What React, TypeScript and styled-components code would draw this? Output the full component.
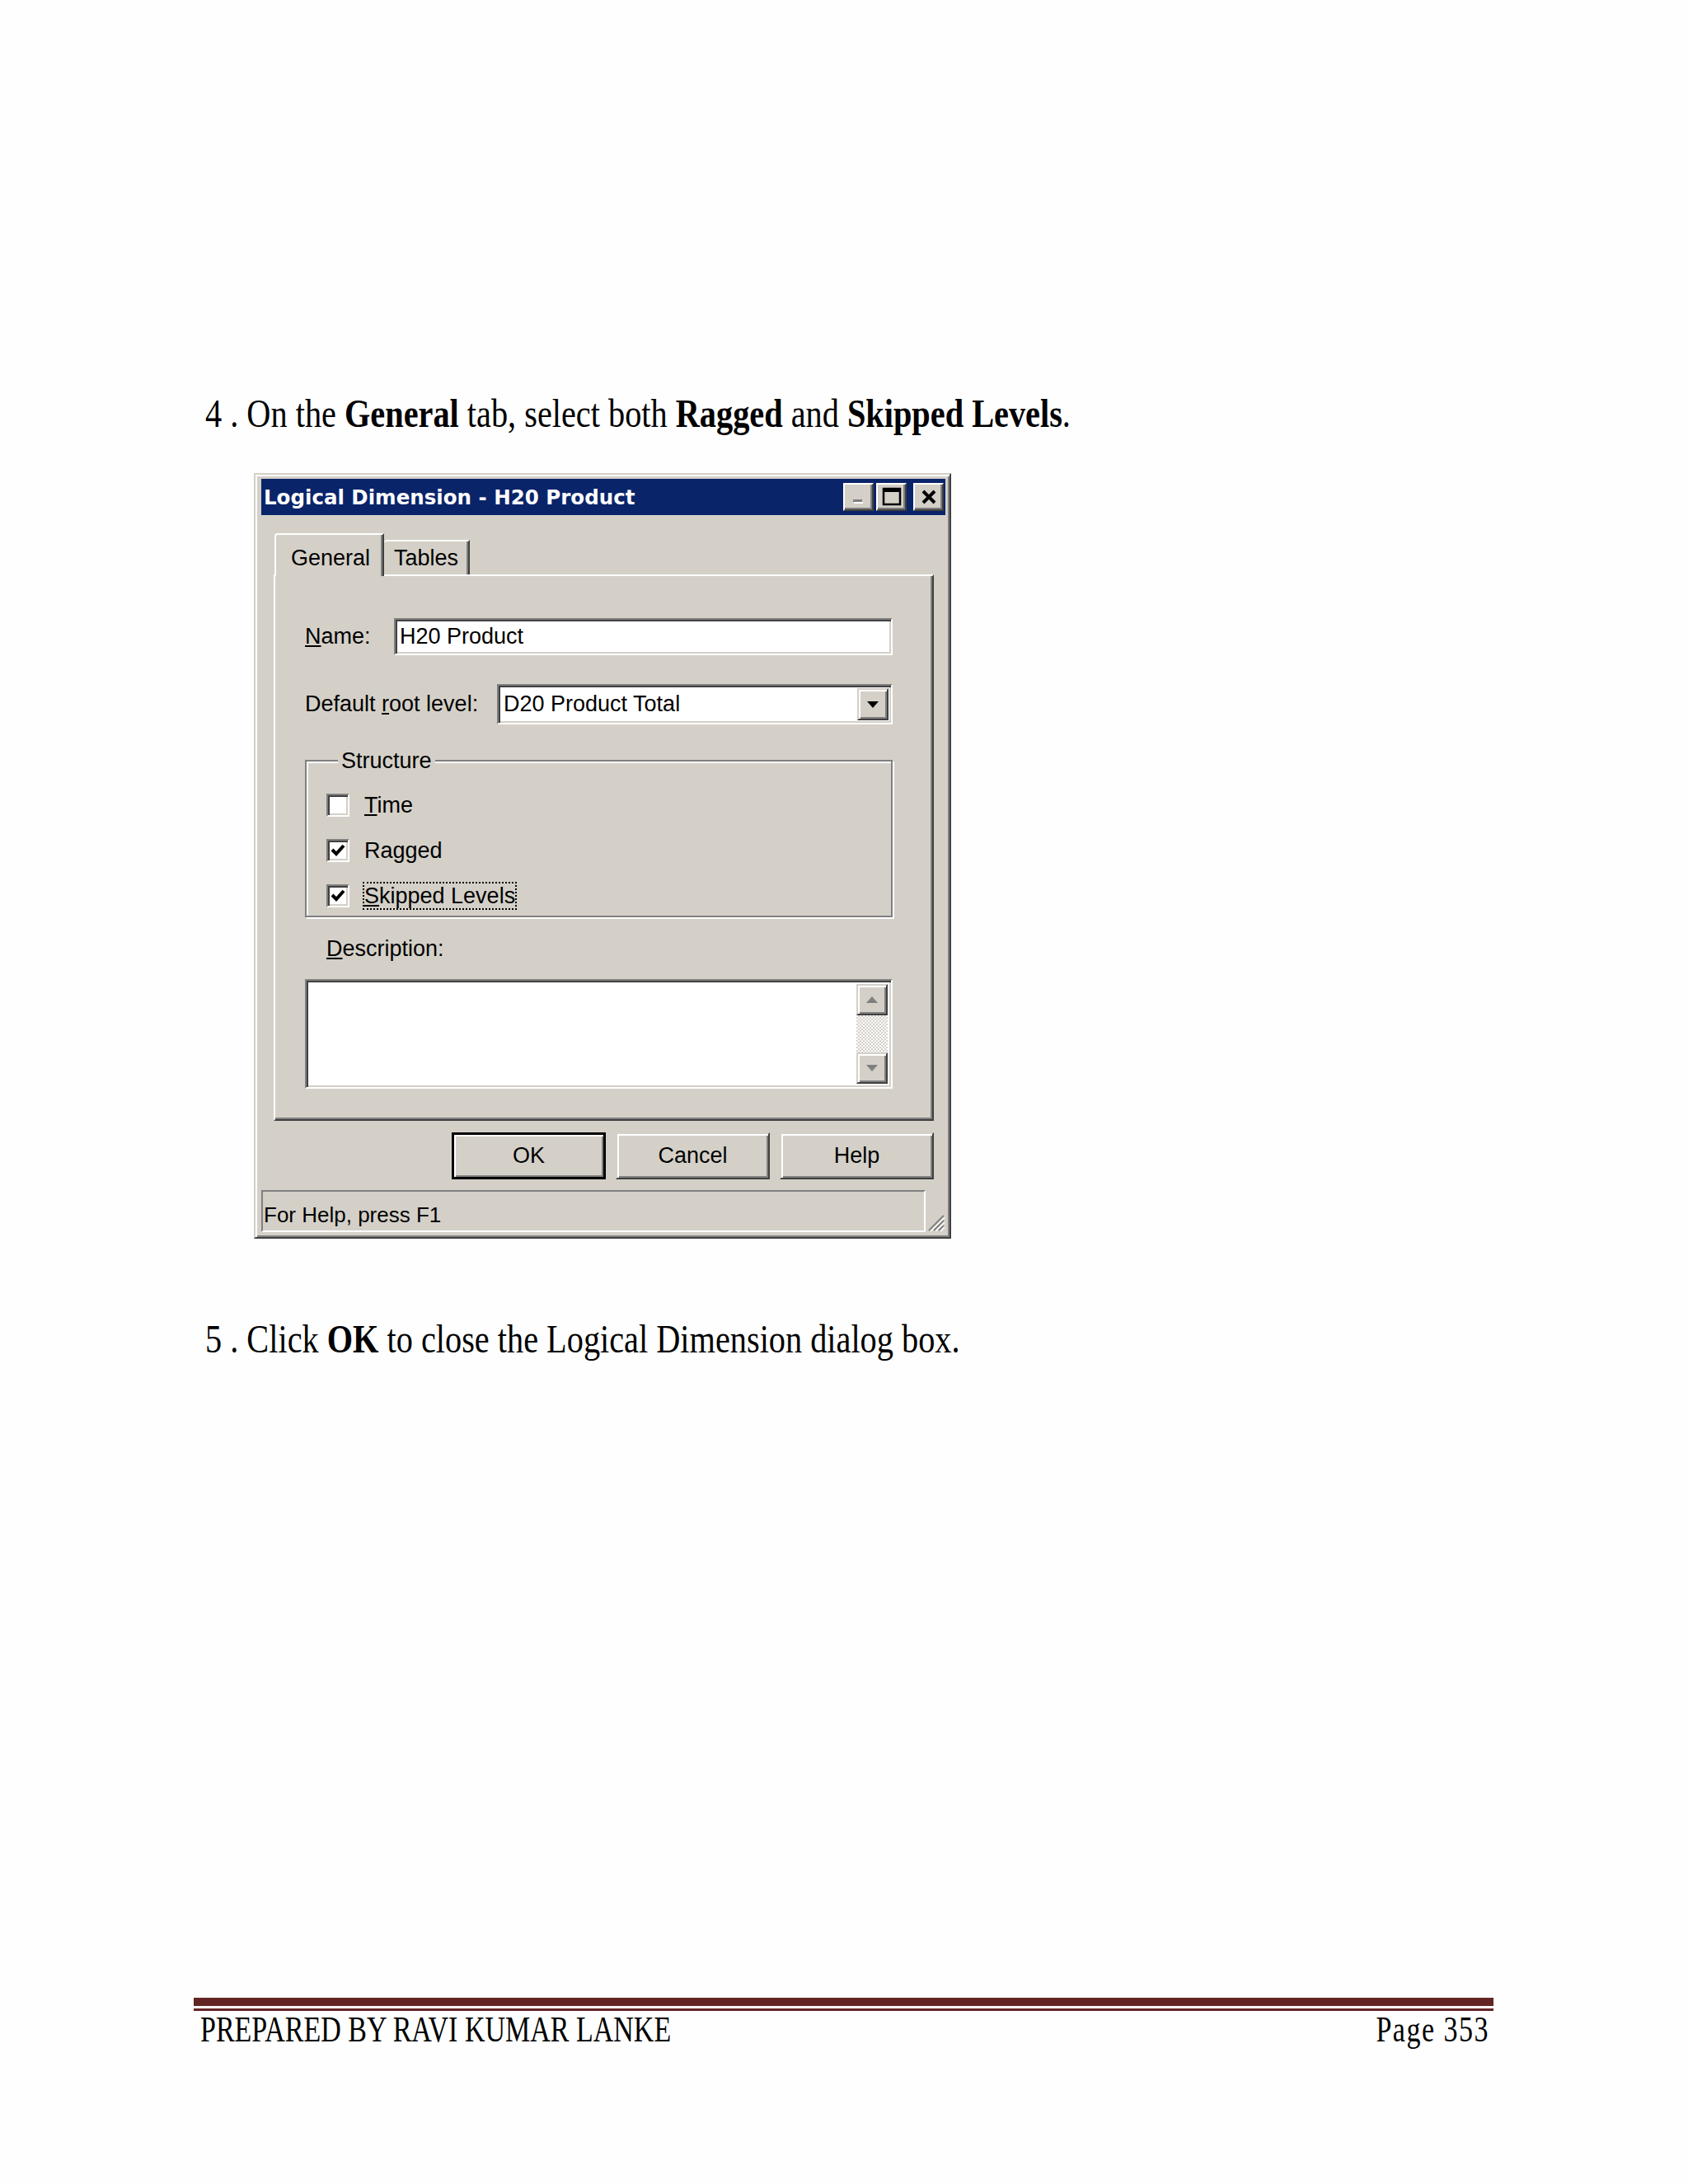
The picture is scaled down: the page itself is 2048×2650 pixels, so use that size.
import styled, { createGlobalStyle } from "styled-components";

const GlobalStyle = createGlobalStyle`
  body {
    margin: 0;
    background: #ffffff;
  }
`;

const face = "#d4d0c8";
const shadow = "#808080";
const dark = "#404040";

function App() {
  return (
    <Page>
      <GlobalStyle />
      <Step $top={479}>
        4 . On the <b>General</b> tab, select both <b>Ragged</b> and{" "}
        <b>Skipped Levels</b>.
      </Step>

      <Window>
        <TitleBar>
          <Title>Logical Dimension - H20 Product</Title>
          <CaptionButtons>
            <CaptionButton>
              <svg width="20" height="20" viewBox="0 0 20 20">
                <rect x="3" y="13" width="11" height="3" fill={shadow} />
                <rect x="4" y="16" width="11" height="2" fill="#fff" />
              </svg>
            </CaptionButton>
            <CaptionButton>
              <svg width="24" height="24" viewBox="0 0 24 24">
                <rect x="2" y="2" width="20" height="19" fill="none" stroke="#000" strokeWidth="2.5" />
                <rect x="2" y="2" width="20" height="4" fill="#000" />
              </svg>
            </CaptionButton>
            <CaptionButton $gap>
              <svg width="22" height="20" viewBox="0 0 22 20">
                <path d="M4 3 L18 17 M18 3 L4 17" stroke="#000" strokeWidth="4" />
              </svg>
            </CaptionButton>
          </CaptionButtons>
        </TitleBar>

        <Body>
          <TabStrip>
            <Tab $active>General</Tab>
            <Tab>Tables</Tab>
          </TabStrip>

          <TabPanel>
            <FieldRow $height={45}>
              <FieldLabel $width={108}>
                <u>N</u>ame:
              </FieldLabel>
              <TextBox>H20 Product</TextBox>
            </FieldRow>

            <FieldRow $height={49} $gap={35}>
              <FieldLabel $width={233}>
                Default <u>r</u>oot level:
              </FieldLabel>
              <Combo>
                <ComboValue>D20 Product Total</ComboValue>
                <ComboArrow>
                  <svg width="16" height="10" viewBox="0 0 16 10">
                    <path d="M1 1 H15 L8 9 Z" fill="#000" />
                  </svg>
                </ComboArrow>
              </Combo>
            </FieldRow>

            <GroupBox>
              <Legend>Structure</Legend>
              <CheckRow>
                <CheckBox />
                <CheckLabel>
                  <u>T</u>ime
                </CheckLabel>
              </CheckRow>
              <CheckRow>
                <CheckBox>
                  <CheckMark />
                </CheckBox>
                <CheckLabel>Ragged</CheckLabel>
              </CheckRow>
              <CheckRow>
                <CheckBox>
                  <CheckMark />
                </CheckBox>
                <CheckLabel $focused>
                  <u>S</u>kipped Levels
                </CheckLabel>
              </CheckRow>
            </GroupBox>

            <DescLabel>
              <u>D</u>escription:
            </DescLabel>
            <TextArea>
              <ScrollBar>
                <ScrollButton>
                  <svg width="18" height="12" viewBox="0 0 18 12">
                    <path d="M2 10 H16 L9 2 Z" fill={shadow} />
                  </svg>
                </ScrollButton>
                <ScrollTrack />
                <ScrollButton>
                  <svg width="18" height="12" viewBox="0 0 18 12">
                    <path d="M2 2 H16 L9 10 Z" fill={shadow} />
                  </svg>
                </ScrollButton>
              </ScrollBar>
            </TextArea>
          </TabPanel>

          <ButtonRow>
            <PushButton $default>OK</PushButton>
            <PushButton>Cancel</PushButton>
            <PushButton>Help</PushButton>
          </ButtonRow>

          <StatusRow>
            <StatusBar>For Help, press F1</StatusBar>
            <Grip>
              <svg width="24" height="30" viewBox="0 0 24 30">
                <path d="M22 10 L4 28 M22 16 L10 28 M22 22 L16 28" stroke={shadow} strokeWidth="2" />
                <path d="M23 12 L6 29 M23 18 L12 29 M23 24 L18 29" stroke="#fff" strokeWidth="1.5" />
              </svg>
            </Grip>
          </StatusRow>
        </Body>
      </Window>

      <Step $top={99}>
        5 . Click <b>OK</b> to close the Logical Dimension dialog box.
      </Step>

      <Footer>
        <FooterRule />
        <FooterText>
          <span>PREPARED BY RAVI KUMAR LANKE</span>
          <PageNo>Page 353</PageNo>
        </FooterText>
      </Footer>
    </Page>
  );
}

const Page = styled.div`
  width: 2048px;
  min-height: 2650px;
  background: #fefefe;
  overflow: hidden;
`;

const Step = styled.p<{ $top: number }>`
  margin: ${(p) => p.$top}px 0 0 249px;
  font-family: "Liberation Serif", "Times New Roman", serif;
  font-size: 40.3px;
  line-height: 46px;
  color: #000;
  transform: scaleY(1.2);
  white-space: nowrap;
`;

const Window = styled.div`
  width: 846px;
  margin: 49px 0 0 308px;
  box-sizing: border-box;
  background: ${face};
  border: 2px solid;
  border-color: ${face} ${dark} ${dark} ${face};
  box-shadow: inset 2px 2px #fff, inset -2px -2px ${shadow};
  padding: 5px 5px 6px 7px;
  font-family: "Liberation Sans", Arial, sans-serif;
  font-size: 27px;
  color: #000;
`;

const TitleBar = styled.div`
  height: 44px;
  background: #0a246a;
  display: flex;
  align-items: center;
  justify-content: space-between;
  padding: 0 2px 0 3px;
`;

const Title = styled.span`
  font-family: "DejaVu Sans", Verdana, sans-serif;
  font-weight: bold;
  font-size: 24.5px;
  color: #fff;
  white-space: nowrap;
`;

const CaptionButtons = styled.div`
  display: flex;
  align-items: center;
`;

const CaptionButton = styled.div<{ $gap?: boolean }>`
  width: 37px;
  height: 34px;
  margin-left: ${(p) => (p.$gap ? "8px" : "3px")};
  box-sizing: border-box;
  background: ${face};
  border: 2px solid;
  border-color: #fff ${dark} ${dark} #fff;
  box-shadow: inset -2px -2px ${shadow};
  display: flex;
  align-items: center;
  justify-content: center;
`;

const Body = styled.div`
  padding: 22px 14px 0 0;
`;

const TabStrip = styled.div`
  display: flex;
  align-items: flex-end;
  height: 50px;
  margin-left: 16px;
  position: relative;
  z-index: 1;
`;

const Tab = styled.div<{ $active?: boolean }>`
  height: ${(p) => (p.$active ? 52 : 42)}px;
  margin-bottom: ${(p) => (p.$active ? -2 : 0)}px;
  padding: ${(p) => (p.$active ? "6px 15px 0 18px" : "0 12px 0 12px")};
  box-sizing: border-box;
  background: ${face};
  border-top: 2px solid #fff;
  border-left: ${(p) => (p.$active ? "2px solid #fff" : "none")};
  border-right: 2px solid ${dark};
  box-shadow: inset -2px 0 ${shadow};
  border-top-left-radius: 4px;
  display: flex;
  align-items: center;
  font-size: 27px;
  white-space: nowrap;
`;

const TabPanel = styled.div`
  margin-left: 15px;
  box-sizing: border-box;
  border: 2px solid;
  border-color: #fff ${dark} ${dark} #fff;
  box-shadow: inset -2px -2px ${shadow};
  padding: 51px 48px 37px 36px;
`;

const FieldRow = styled.div<{ $height: number; $gap?: number }>`
  display: flex;
  align-items: center;
  height: ${(p) => p.$height}px;
  margin-top: ${(p) => p.$gap ?? 0}px;
`;

const FieldLabel = styled.span<{ $width: number }>`
  width: ${(p) => p.$width}px;
  flex: none;
  white-space: nowrap;
`;

const sunken = `
  box-sizing: border-box;
  background: #fff;
  border: 2px solid;
  border-color: ${shadow} #fff #fff ${shadow};
  box-shadow: inset 2px 2px ${dark}, inset -2px -2px ${face};
`;

const TextBox = styled.div`
  ${sunken}
  flex: 1;
  height: 100%;
  display: flex;
  align-items: center;
  padding-left: 5px;
  white-space: nowrap;
`;

const Combo = styled.div`
  ${sunken}
  flex: 1;
  height: 100%;
  display: flex;
  align-items: stretch;
  padding: 3px;
`;

const ComboValue = styled.div`
  flex: 1;
  display: flex;
  align-items: center;
  padding-left: 3px;
  white-space: nowrap;
`;

const raised = `
  box-sizing: border-box;
  background: ${face};
  border: 2px solid;
  border-color: ${face} ${dark} ${dark} ${face};
  box-shadow: inset 2px 2px #fff, inset -2px -2px ${shadow};
`;

const ComboArrow = styled.div`
  ${raised}
  width: 38px;
  display: flex;
  align-items: center;
  justify-content: center;
`;

const GroupBox = styled.fieldset`
  margin: 28px 0 0 0;
  padding: 0 0 10px 24px;
  min-width: 0;
  border: 2px solid ${shadow};
  box-shadow: inset 2px 2px #fff, 2px 2px #fff;
  display: flex;
  flex-direction: column;
  gap: 26px;
`;

const Legend = styled.legend`
  margin-left: 14px;
  padding: 0 4px 0 4px;
  height: 32px;
  line-height: 32px;
  background: ${face};
  margin-bottom: 23px;
`;

const CheckRow = styled.div`
  display: flex;
  align-items: center;
  height: 29px;
  gap: 17px;
`;

const CheckBox = styled.div`
  ${sunken}
  width: 28px;
  height: 28px;
  flex: none;
  display: flex;
  align-items: center;
  justify-content: center;
`;

function CheckMark() {
  return (
    <svg width="18" height="18" viewBox="0 0 18 18">
      <path d="M2 8 L7 13 L16 3" fill="none" stroke="#000" strokeWidth="4" />
    </svg>
  );
}

const CheckLabel = styled.span<{ $focused?: boolean }>`
  white-space: nowrap;
  line-height: 32px;
  padding: 0 1px;
  outline: ${(p) => (p.$focused ? "2px dotted #000" : "none")};
  outline-offset: -1px;
`;

const DescLabel = styled.div`
  margin: 22px 0 0 26px;
  height: 32px;
  line-height: 32px;
`;

const TextArea = styled.div`
  ${sunken}
  margin-top: 21px;
  height: 133px;
  display: flex;
  justify-content: flex-end;
  padding: 4px;
`;

const ScrollBar = styled.div`
  width: 38px;
  display: flex;
  flex-direction: column;
`;

const ScrollButton = styled.div`
  ${raised}
  height: 38px;
  display: flex;
  align-items: center;
  justify-content: center;
`;

const ScrollTrack = styled.div`
  flex: 1;
  background-color: #fff;
  background-image: repeating-conic-gradient(${face} 0 25%, #fff 0 50%);
  background-size: 4px 4px;
`;

const ButtonRow = styled.div`
  display: flex;
  justify-content: flex-end;
  gap: 12px;
  margin-top: 14px;
`;

const PushButton = styled.div<{ $default?: boolean }>`
  ${raised}
  width: 187px;
  height: 57px;
  display: flex;
  align-items: center;
  justify-content: center;
  ${(p) =>
    p.$default &&
    `
    border: 3px solid #000;
    box-shadow: inset 2px 2px #fff, inset -2px -2px ${shadow};
  `}
`;

const StatusRow = styled.div`
  display: flex;
  margin-top: 13px;
  margin-right: -14px;
  height: 51px;
`;

const StatusBar = styled.div`
  flex: 1;
  box-sizing: border-box;
  border: 2px solid;
  border-color: ${shadow} #fff #fff ${shadow};
  display: flex;
  align-items: flex-end;
  padding: 0 0 3px 1px;
  font-size: 26px;
  white-space: nowrap;
`;

const Grip = styled.div`
  width: 24px;
  display: flex;
  align-items: flex-end;
`;

const Footer = styled.div`
  margin: 776px 0 0 235px;
  width: 1577px;
`;

const FooterRule = styled.div`
  height: 3px;
  border-top: 10px solid #632523;
  border-bottom: 3px solid #632523;
`;

const FooterText = styled.div`
  display: flex;
  justify-content: space-between;
  padding: 6px 5px 0 8px;
  font-family: "Liberation Serif", "Times New Roman", serif;
  font-size: 34px;
  line-height: 32px;
  color: #000;
  transform: scaleY(1.32);
`;

const PageNo = styled.span`
  letter-spacing: 1.5px;
`;

export default App;
